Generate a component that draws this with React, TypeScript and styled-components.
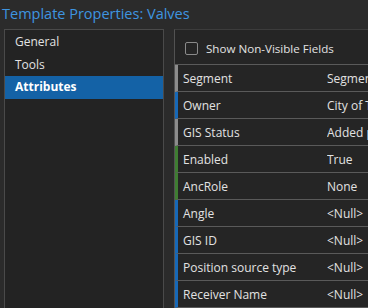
import styled, { createGlobalStyle } from "styled-components";

type Field = {
  label: string;
  value: string;
  marker: "gray" | "blue" | "green";
};

const fields: Field[] = [
  { label: "Segment", value: "Segment", marker: "gray" },
  { label: "Owner", value: "City of Tampa", marker: "blue" },
  { label: "GIS Status", value: "Added per", marker: "gray" },
  { label: "Enabled", value: "True", marker: "green" },
  { label: "AncRole", value: "None", marker: "green" },
  { label: "Angle", value: "<Null>", marker: "blue" },
  { label: "GIS ID", value: "<Null>", marker: "blue" },
  { label: "Position source type", value: "<Null>", marker: "blue" },
  { label: "Receiver Name", value: "<Null>", marker: "blue" },
];

const markerColors = {
  gray: "#8c8c8c",
  blue: "#1769b8",
  green: "#3f7d32",
};

const tabs = ["General", "Tools", "Attributes"];

export default function App() {
  return (
    <>
      <GlobalStyle />
      <Page>
        <Title>Template Properties: Valves</Title>
        <Body>
          <SideList>
            {tabs.map((t) => (
              <SideItem key={t} $active={t === "Attributes"}>
                {t}
              </SideItem>
            ))}
          </SideList>
          <Content>
            <CheckRow>
              <CheckBox />
              <span>Show Non-Visible Fields</span>
            </CheckRow>
            <Table>
              {fields.map((f) => (
                <Row key={f.label} $marker={markerColors[f.marker]}>
                  <Label>{f.label}</Label>
                  <Value>{f.value}</Value>
                </Row>
              ))}
            </Table>
          </Content>
        </Body>
      </Page>
    </>
  );
}

const GlobalStyle = createGlobalStyle`
  html, body {
    margin: 0;
    padding: 0;
    background: #2b2b2b;
    overflow: hidden;
  }
  body {
    font-family: "Open Sans", "Noto Sans", sans-serif;
    color: #e2e2e2;
  }
`;

const Page = styled.div`
  width: 368px;
  height: 308px;
  display: flex;
  flex-direction: column;
  overflow: hidden;
`;

const Title = styled.div`
  height: 29px;
  padding-left: 2px;
  box-sizing: border-box;
  font-size: 14.5px;
  line-height: 28px;
  color: #3e95e0;
  white-space: nowrap;
`;

const Body = styled.div`
  flex: 1;
  display: flex;
  gap: 10px;
  padding-left: 4px;
  min-height: 0;
`;

const SideList = styled.div`
  width: 160px;
  flex-shrink: 0;
  background: #232323;
  border: 1px solid #4a4a4a;
  border-bottom: none;
  box-sizing: border-box;
  padding-top: 1px;
`;

const SideItem = styled.div<{ $active?: boolean }>`
  height: 22.5px;
  line-height: 22px;
  padding-left: 10px;
  font-size: 12px;
  font-weight: ${(p) => (p.$active ? 700 : 400)};
  color: ${(p) => (p.$active ? "#ffffff" : "#e2e2e2")};
  background: ${(p) => (p.$active ? "#1462a6" : "transparent")};
`;

const Content = styled.div`
  flex: 1;
  min-width: 0;
  background: #252525;
  border-left: 1px solid #525252;
  border-top: 1px solid #3c3c3c;
  display: flex;
  flex-direction: column;
`;

const CheckRow = styled.div`
  height: 34px;
  display: flex;
  align-items: center;
  gap: 8px;
  padding-left: 10px;
  padding-top: 2px;
  box-sizing: border-box;
  font-size: 11.6px;
  white-space: nowrap;
`;

const CheckBox = styled.span`
  width: 13px;
  height: 13px;
  box-sizing: border-box;
  border: 1px solid #8a8a8a;
  border-radius: 2px;
  background: #252525;
`;

const Table = styled.div`
  border-top: 1px solid #5a5a5a;
  display: flex;
  flex-direction: column;
`;

const Row = styled.div<{ $marker: string }>`
  height: 27px;
  box-sizing: border-box;
  display: grid;
  grid-template-columns: 149px 1fr;
  align-items: center;
  border-left: 3px solid ${(p) => p.$marker};
  border-bottom: 1px solid #5a5a5a;
  font-size: 12px;
  white-space: nowrap;
`;

const Label = styled.span`
  padding-left: 5px;
  overflow: hidden;
`;

const Value = styled.span`
  overflow: hidden;
`;
